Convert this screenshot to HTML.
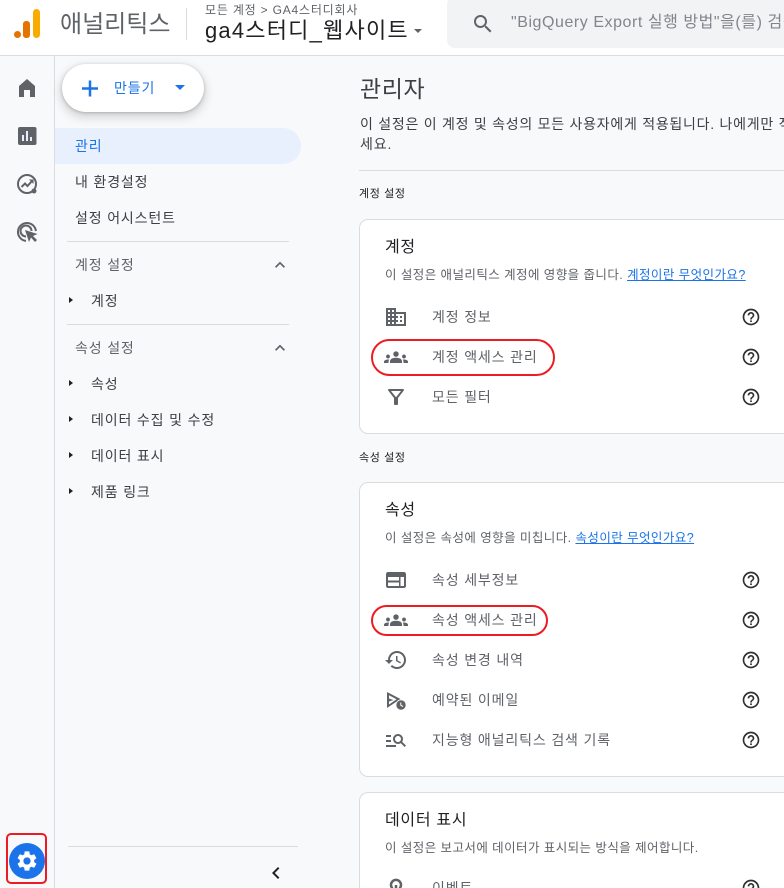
<!DOCTYPE html>
<html lang="ko"><head><meta charset="utf-8"><title>관리자</title>
<style>
html,body{margin:0;padding:0;width:784px;height:888px;overflow:hidden}
#p{position:absolute;left:0;top:0;width:784px;height:888px;overflow:hidden;background:#f8f9fb;font-family:"Liberation Sans","Noto Sans CJK KR",sans-serif;color:#3c4043}
.a{position:absolute}
.t{position:absolute;white-space:nowrap;line-height:20px;font-size:14px;letter-spacing:.85px}
svg{position:absolute;overflow:visible}
.g{fill:#5f6368}
.card{position:absolute;left:359px;width:425px;background:#fff;border:1px solid #dadce0;border-right:0;border-radius:9px 0 0 9px;box-sizing:border-box}
.line{position:absolute;height:1px;background:#dadce0}
.row{color:#5f6368;left:432px}
.sub{left:385px;font-size:12.5px;letter-spacing:.43px;color:#5f6368}
.h{left:385px;font-size:16px;letter-spacing:.7px;color:#202124}
.lb{left:359px;font-size:11px;letter-spacing:.6px;color:#202124}
.tri{position:absolute;width:0;height:0;border-left:4px solid #202124;border-top:3.5px solid transparent;border-bottom:3.5px solid transparent;left:69px}
a{color:#1a73e8;text-decoration:underline}
.red{position:absolute;border:2px solid #ed1c24;box-sizing:border-box}
.q{fill:#2d3033}
</style></head><body><div id="p">

<svg width="0" height="0" style="left:0;top:0"><defs>
<symbol id="help" viewBox="0 0 24 24"><path class="q" d="M11 18h2v-2h-2v2zm1-16C6.480 2 2 6.480 2 12s4.480 10 10 10 10-4.480 10-10S17.520 2 12 2zm0 18c-4.410 0-8-3.590-8-8s3.590-8 8-8 8 3.590 8 8-3.590 8-8 8zm0-14c-2.210 0-4 1.790-4 4h2c0-1.100.9-2 2-2s2 .9 2 2c0 2-3 1.750-3 5h2c0-2.250 3-2.500 3-5 0-2.210-1.790-4-4-4z"/></symbol>
<symbol id="grp" viewBox="0 0 24 24"><path class="g" d="M4 13.500c1.100 0 2-.9 2-2s-.9-2-2-2-2 .9-2 2 .9 2 2 2zm1.130 1.100c-.37-.06-.74-.1-1.130-.1-.99 0-1.930.21-2.780.58C.48 15.400 0 16.120 0 16.930V18h4.500v-1.110c0-.83.23-1.610.63-2.290zM20 13.500c1.100 0 2-.9 2-2s-.9-2-2-2-2 .9-2 2 .9 2 2 2zm4 3.430c0-.81-.48-1.530-1.220-1.850-.85-.37-1.790-.58-2.780-.58-.39 0-.76.04-1.130.1.4.68.63 1.460.63 2.290V18H24v-1.070zm-7.760-3.280c-1.170-.52-2.610-.9-4.240-.9-1.630 0-3.070.39-4.240.9C6.680 14.130 6 15.210 6 16.390V18h12v-1.610c0-1.180-.68-2.260-1.760-2.740zM12 11.800c1.500 0 2.700-1.200 2.700-2.700S13.500 6.400 12 6.400 9.300 7.600 9.300 9.100s1.200 2.700 2.700 2.700z"/></symbol>
</defs></svg>

<div class="a" style="left:0;top:0;width:784px;height:55px;background:#fff"></div>
<div class="a" style="left:0;top:55px;width:784px;height:1px;background:#dadce0"></div>
<div class="a" style="left:54px;top:56px;width:1px;height:832px;background:#dadce0"></div>

<div class="a" style="left:14px;top:31px;width:7px;height:7px;border-radius:50%;background:#e37400"></div>
<div class="a" style="left:23px;top:21px;width:7px;height:17px;border-radius:3px;background:#e37400"></div>
<div class="a" style="left:33px;top:9px;width:7px;height:29px;border-radius:3.500px;background:#f9ab00"></div>
<div class="t" style="left:60px;top:13px;font-size:24px;line-height:24px;letter-spacing:0;color:#5f6368">애널리틱스</div>
<div class="a" style="left:186px;top:8px;width:1px;height:32px;background:#dadce0"></div>
<div class="t" style="left:205px;top:1px;font-size:12px;line-height:18px;letter-spacing:.8px;color:#5f6368">모든 계정 &gt; GA4스터디회사</div>
<div class="t" style="left:205px;top:17px;font-size:22px;line-height:28px;letter-spacing:1.200px;color:#202124">ga4스터디_웹사이트</div>
<div class="a" style="left:414px;top:29px;width:0;height:0;border-left:4.500px solid transparent;border-right:4.500px solid transparent;border-top:4.500px solid #5f6368"></div>

<div class="a" style="left:447px;top:-4px;width:345px;height:52px;background:#f1f3f4;border-radius:8px"></div>
<svg style="left:471px;top:12px" width="24" height="24" viewBox="0 0 24 24"><path class="g" d="M15.500 14h-.79l-.28-.27C15.410 12.590 16 11.110 16 9.500 16 5.910 13.090 3 9.500 3S3 5.910 3 9.500 5.910 16 9.500 16c1.610 0 3.090-.59 4.230-1.570l.27.28v.79l5 4.990L20.490 19l-4.990-5zm-6 0C7.010 14 5 11.990 5 9.500S7.010 5 9.500 5 14 7.010 14 9.500 11.990 14 9.500 14z"/></svg>
<div class="t" style="left:511px;top:13px;font-size:16px;letter-spacing:.55px;color:#80868b">"BigQuery Export 실행 방법"을(를) 검색</div>

<svg style="left:0;top:0" width="54" height="250" viewBox="0 0 54 250">
<path class="g" d="M27 79L35 86V97H30V90H24V97H19V86Z"/>
<rect class="g" x="18" y="127" width="18.500" height="18" rx="2"/><path fill="#e8eefc" d="M22 135h2v6h-2zM26 131h2v10h-2zM30 137h2v4h-2z"/>
<circle cx="27" cy="184" r="9" fill="none" stroke="#5f6368" stroke-width="2"/><path fill="none" stroke="#5f6368" stroke-width="2" d="M21.500 187l3.500-3.500 2.500 2.500 4.500-5"/><path class="g" d="M29 179.500h4.500V184z"/><circle cx="34" cy="191" r="2.500" fill="#5f6368"/>
<path fill="none" stroke="#5f6368" stroke-width="2" d="M26 240.900A9 9 0 1 1 35.900 231M26 236.500A5.500 5.500 0 1 1 31.500 231"/><path class="g" d="M25 230l4 12 2-4.500 4 4.500 2-2-4-4 4.500-2z"/>
</svg>

<div class="a" style="left:62px;top:64px;width:142px;height:48px;border-radius:24px;background:#fff;box-shadow:0 1px 3px rgba(60,64,67,.3),0 4px 8px 3px rgba(60,64,67,.15)"></div>
<svg style="left:78px;top:76px" width="24" height="24" viewBox="0 0 24 24"><path stroke="#1a73e8" stroke-width="2.500" fill="none" d="M4 12.500h16M12 4.500v16"/></svg>
<div class="t" style="left:114px;top:78px;color:#1a73e8">만들기</div>
<div class="a" style="left:175px;top:85px;width:0;height:0;border-left:5px solid transparent;border-right:5px solid transparent;border-top:5.500px solid #1a73e8"></div>

<div class="a" style="left:55px;top:128px;width:246px;height:36px;background:#e8f0fe;border-radius:0 18px 18px 0"></div>
<div class="t" style="left:75px;top:136px;color:#1a73e8">관리</div>
<div class="t" style="left:75px;top:172px">내 환경설정</div>
<div class="t" style="left:75px;top:208px">설정 어시스턴트</div>
<div class="line" style="left:67px;top:241px;width:222px"></div>
<div class="t" style="left:75px;top:255px;color:#5f6368">계정 설정</div>
<svg style="left:270px;top:255px" width="20" height="20" viewBox="0 0 24 24"><path class="g" d="M12 8l-6 6 1.410 1.410L12 10.830l4.590 4.580L18 14z"/></svg>
<div class="tri" style="top:297px"></div>
<div class="t" style="left:91px;top:291px">계정</div>
<div class="line" style="left:67px;top:324px;width:222px"></div>
<div class="t" style="left:75px;top:338px;color:#5f6368">속성 설정</div>
<svg style="left:270px;top:338px" width="20" height="20" viewBox="0 0 24 24"><path class="g" d="M12 8l-6 6 1.410 1.410L12 10.830l4.590 4.580L18 14z"/></svg>
<div class="tri" style="top:380px"></div><div class="t" style="left:91px;top:374px">속성</div>
<div class="tri" style="top:416px"></div><div class="t" style="left:91px;top:410px">데이터 수집 및 수정</div>
<div class="tri" style="top:452px"></div><div class="t" style="left:91px;top:446px">데이터 표시</div>
<div class="tri" style="top:488px"></div><div class="t" style="left:91px;top:482px">제품 링크</div>
<div class="line" style="left:68px;top:846px;width:230px"></div>
<svg style="left:264px;top:861px" width="24" height="24" viewBox="0 0 24 24"><path fill="#202124" d="M15.410 7.410L14 6l-6 6 6 6 1.410-1.410L10.830 12z"/></svg>

<div class="a" style="left:9px;top:843px;width:36px;height:36px;border-radius:50%;background:#1a73e8"></div>
<svg style="left:15px;top:849px" width="24" height="24" viewBox="0 0 24 24"><path fill="#fff" d="M19.140 12.940c.04-.3.06-.61.06-.94 0-.32-.02-.64-.07-.94l2.030-1.580c.18-.14.23-.41.12-.61l-1.920-3.320c-.12-.22-.37-.29-.59-.22l-2.390.96c-.5-.38-1.030-.7-1.620-.94l-.36-2.540c-.04-.24-.24-.41-.48-.41h-3.840c-.24 0-.43.17-.47.41l-.36 2.540c-.59.24-1.130.57-1.620.94l-2.390-.96c-.22-.08-.47 0-.59.22L2.740 8.870c-.12.21-.08.47.12.61l2.030 1.580c-.05.3-.09.63-.09.94s.02.64.07.94l-2.030 1.580c-.18.14-.23.41-.12.61l1.920 3.320c.12.22.37.29.59.22l2.390-.96c.5.38 1.030.7 1.620.94l.36 2.540c.05.24.24.41.48.41h3.840c.24 0 .44-.17.47-.41l.36-2.540c.59-.24 1.130-.56 1.620-.94l2.390.96c.22.08.47 0 .59-.22l1.920-3.320c.12-.22.07-.47-.12-.61l-2.010-1.580zM12 15.600c-1.980 0-3.600-1.620-3.600-3.600s1.620-3.600 3.600-3.600 3.600 1.620 3.600 3.600-1.620 3.600-3.600 3.600z"/></svg>
<div class="red" style="left:6px;top:833px;width:41px;height:51px;border-radius:5px"></div>

<div class="t" style="left:360px;top:75px;font-size:23px;line-height:28px;letter-spacing:.6px">관리자</div>
<div class="t" style="left:360px;top:114px;width:424px;overflow:hidden;letter-spacing:.74px">이 설정은 이 계정 및 속성의 모든 사용자에게 적용됩니다. 나에게만 적용되는 설정을 변경하려면</div>
<div class="t" style="left:360px;top:134px">세요.</div>
<div class="line" style="left:359px;top:170px;width:425px"></div>
<div class="t lb" style="top:184px">계정 설정</div>

<div class="card" style="top:219px;height:215px"></div>
<div class="t h" style="top:238px">계정</div>
<div class="t sub" style="top:265px">이 설정은 애널리틱스 계정에 영향을 줍니다. <a>계정이란 무엇인가요?</a></div>

<svg style="left:384px;top:305px" width="24" height="24" viewBox="0 0 24 24"><path class="g" d="M12 7V3H2v18h20V7H12zM6 19H4v-2h2v2zm0-4H4v-2h2v2zm0-4H4V9h2v2zm0-4H4V5h2v2zm4 12H8v-2h2v2zm0-4H8v-2h2v2zm0-4H8V9h2v2zm0-4H8V5h2v2zm10 12h-8v-2h2v-2h-2v-2h2v-2h-2V9h8v10zm-2-8h-2v2h2v-2zm0 4h-2v2h2v-2z"/></svg>
<div class="t row" style="top:307px">계정 정보</div>
<svg style="left:384px;top:345px" width="24" height="24"><use href="#grp"/></svg>
<div class="t row" style="top:347px">계정 액세스 관리</div>
<svg style="left:384px;top:385px" width="24" height="24" viewBox="0 0 24 24"><path class="g" d="M7 6h10l-5.010 6.300L7 6zm-2.750-.39C6.270 8.200 10 13 10 13v6c0 .55.45 1 1 1h2c.55 0 1-.45 1-1v-6s3.720-4.800 5.740-7.390c.51-.66.04-1.610-.79-1.610H5.040c-.83 0-1.300.95-.79 1.610z"/></svg>
<div class="t row" style="top:387px">모든 필터</div>
<svg style="left:741px;top:307px" width="20" height="20"><use href="#help"/></svg>
<svg style="left:741px;top:347px" width="20" height="20"><use href="#help"/></svg>
<svg style="left:741px;top:387px" width="20" height="20"><use href="#help"/></svg>
<div class="red" style="left:371px;top:339px;width:184px;height:37px;border-radius:19px"></div>

<div class="t lb" style="top:448px">속성 설정</div>
<div class="card" style="top:482px;height:295px"></div>
<div class="t h" style="top:501px">속성</div>
<div class="t sub" style="top:528px">이 설정은 속성에 영향을 미칩니다. <a>속성이란 무엇인가요?</a></div>

<svg style="left:384px;top:568px" width="24" height="24" viewBox="0 0 24 24"><path class="g" d="M20 4H4c-1.100 0-2 .9-2 2v12c0 1.100.9 2 2 2h16c1.100 0 2-.9 2-2V6c0-1.100-.9-2-2-2zM15 18H4v-3.500h11V18zm0-5.500H4V9h11v3.500zm5 5.500h-3.500V9H20v9z"/></svg>
<div class="t row" style="top:570px">속성 세부정보</div>
<svg style="left:384px;top:608px" width="24" height="24"><use href="#grp"/></svg>
<div class="t row" style="top:610px">속성 액세스 관리</div>
<svg style="left:384px;top:648px" width="24" height="24" viewBox="0 0 24 24"><path class="g" d="M13 3c-4.970 0-9 4.030-9 9H1l3.890 3.890.07.14L9 12H6c0-3.870 3.130-7 7-7s7 3.130 7 7-3.130 7-7 7c-1.930 0-3.680-.79-4.940-2.060l-1.420 1.420C8.270 19.990 10.510 21 13 21c4.970 0 9-4.030 9-9s-4.030-9-9-9zm-1 5v5l4.280 2.540.72-1.210-3.500-2.080V8H12z"/></svg>
<div class="t row" style="top:650px">속성 변경 내역</div>
<svg style="left:384px;top:688px" width="24" height="24" viewBox="0 0 24 24"><path class="g" fill-rule="evenodd" d="M3 4L16.500 11 3 20ZM5 7.300V10.500L9.500 12 5 13.500V16.500L12.500 11.200Z"/><circle cx="17" cy="17" r="5.500" fill="#fff"/><circle cx="17" cy="17" r="4.700" fill="#5f6368"/><path d="M16.800 14.500v2.800l2.200 1.200" fill="none" stroke="#fff"/></svg>
<div class="t row" style="top:690px">예약된 이메일</div>
<svg style="left:384px;top:728px" width="24" height="24" viewBox="0 0 24 24"><path class="g" d="M7 9H2V7h5v2zm0 3H2v2h5v-2zm13.590 7l-3.830-3.830c-.8.52-1.740.83-2.760.83-2.760 0-5-2.240-5-5s2.240-5 5-5 5 2.240 5 5c0 1.020-.31 1.960-.83 2.750L22 17.590 20.590 19zM17 11c0-1.650-1.350-3-3-3s-3 1.350-3 3 1.350 3 3 3 3-1.350 3-3zM2 19h10v-2H2v2z"/></svg>
<div class="t row" style="top:730px">지능형 애널리틱스 검색 기록</div>
<svg style="left:741px;top:570px" width="20" height="20"><use href="#help"/></svg>
<svg style="left:741px;top:610px" width="20" height="20"><use href="#help"/></svg>
<svg style="left:741px;top:650px" width="20" height="20"><use href="#help"/></svg>
<svg style="left:741px;top:690px" width="20" height="20"><use href="#help"/></svg>
<svg style="left:741px;top:730px" width="20" height="20"><use href="#help"/></svg>
<div class="red" style="left:371px;top:605px;width:177px;height:31px;border-radius:16px"></div>

<div class="card" style="top:792px;height:120px"></div>
<div class="t h" style="top:811px">데이터 표시</div>
<div class="t sub" style="top:838px">이 설정은 보고서에 데이터가 표시되는 방식을 제어합니다.</div>
<svg style="left:384px;top:876px" width="24" height="24" viewBox="0 0 24 24"><path fill="none" stroke="#5f6368" stroke-width="2.500" d="M8.500 12.500a5 5 0 1 1 7 0M12 9v12"/></svg>
<div class="t row" style="top:878px">이벤트</div>
<svg style="left:741px;top:878px" width="20" height="20"><use href="#help"/></svg>

</div></body></html>
